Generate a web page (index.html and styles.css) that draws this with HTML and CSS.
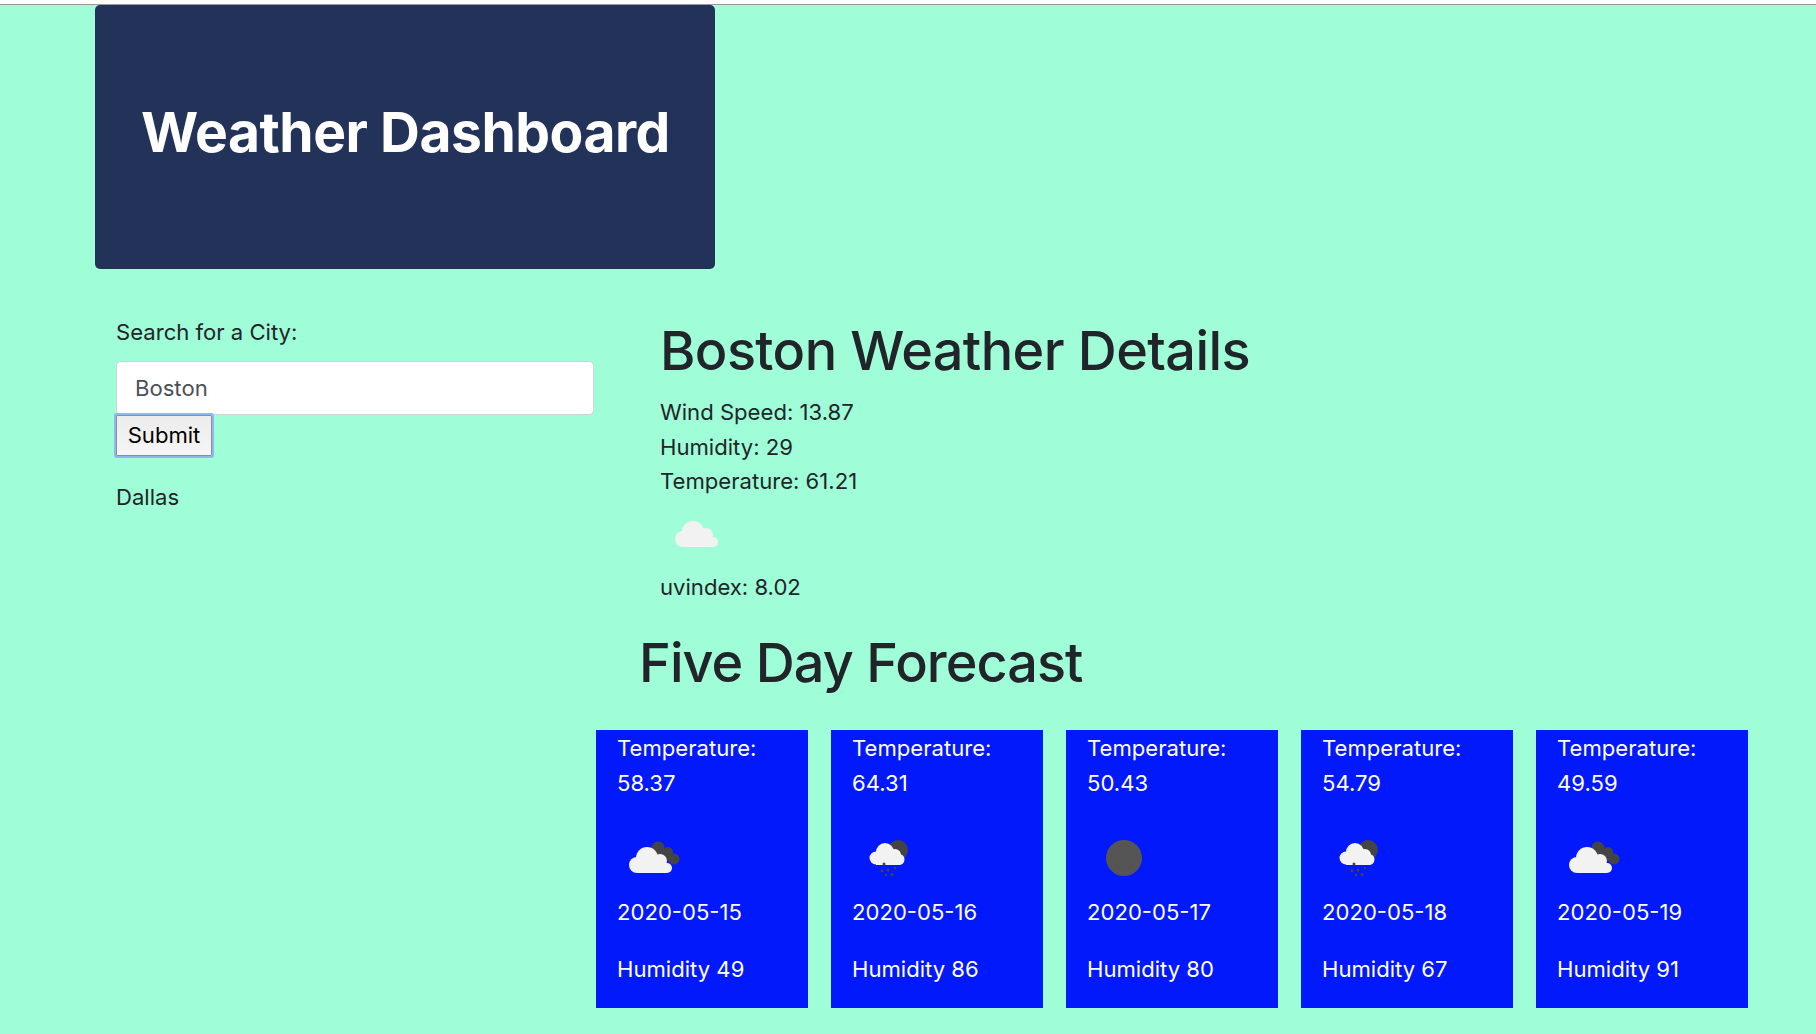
FILE: index.html
```html
<!DOCTYPE html>
<html lang="en">
<head>
    <meta charset="UTF-8">
    <meta name="viewport" content="width=device-width, initial-scale=1.0">
    <title>Weather Dashboard</title>
    <link rel="stylesheet" href="styles.css">
</head>
<body>

    <svg class="icon-defs" width="0" height="0" aria-hidden="true">
        <defs>
            <g id="cloud">
                <circle cx="19" cy="40" r="8"/>
                <circle cx="29" cy="33" r="11"/>
                <circle cx="42" cy="36" r="7"/>
                <circle cx="49" cy="43" r="5"/>
                <rect x="19" y="38" width="30" height="10"/>
            </g>
            <g id="cloud-back">
                <circle cx="40" cy="23" r="6.5"/>
                <circle cx="50" cy="27" r="5"/>
                <circle cx="56" cy="34" r="5.5"/>
                <rect x="38" y="24" width="14" height="12"/>
            </g>
            <g id="shower">
                <circle class="fill-back" cx="45" cy="25" r="10"/>
                <g class="fill-cloud">
                    <circle cx="23" cy="33" r="6.5"/>
                    <circle cx="32" cy="27" r="9"/>
                    <circle cx="42" cy="30" r="6"/>
                    <circle cx="46" cy="34.500" r="5.500"/>
                    <rect x="23" y="31" width="24" height="9"/>
                </g>
                <g class="fill-back">
                    <circle cx="31" cy="39" r="1.500"/>
                    <circle cx="29" cy="46" r="1.400"/>
                    <circle cx="35" cy="45" r="1.500"/>
                    <circle cx="42" cy="43" r="1.200"/>
                    <circle cx="33" cy="50" r="1.200"/>
                    <circle cx="39" cy="49.500" r="1.500"/>
                </g>
            </g>
        </defs>
    </svg>

    <div class="browser-edge"></div>

    <header class="banner">
        <h1>Weather Dashboard</h1>
    </header>

    <div class="content">
        <aside class="search">
            <label class="search-label" for="city">Search for a City:</label>
            <input class="search-input" id="city" type="text" value="Boston">
            <button class="search-button" type="button">Submit</button>
            <p class="history-item">Dallas</p>
        </aside>

        <main class="results">
            <section class="current">
                <h2>Boston Weather Details</h2>
                <p>Wind Speed: 13.87</p>
                <p>Humidity: 29</p>
                <p>Temperature: 61.21</p>
                <svg class="current-icon" viewBox="0 0 70 70"><use class="fill-cloud" href="#cloud"/></svg>
                <p>uvindex: 8.02</p>
            </section>

            <h2 class="forecast-title">Five Day Forecast</h2>

            <div class="forecast">
                <article class="day">
                    <p>Temperature: 58.37</p>
                    <svg class="day-icon" viewBox="0 0 70 70"><use class="fill-back" href="#cloud-back"/><use class="fill-cloud" href="#cloud"/></svg>
                    <p class="day-date">2020-05-15</p>
                    <p>Humidity 49</p>
                </article>
                <article class="day">
                    <p>Temperature: 64.31</p>
                    <svg class="day-icon" viewBox="0 0 70 70"><use href="#shower"/></svg>
                    <p class="day-date">2020-05-16</p>
                    <p>Humidity 86</p>
                </article>
                <article class="day">
                    <p>Temperature: 50.43</p>
                    <svg class="day-icon" viewBox="0 0 70 70"><circle class="fill-sun" cx="36" cy="33" r="18"/></svg>
                    <p class="day-date">2020-05-17</p>
                    <p>Humidity 80</p>
                </article>
                <article class="day">
                    <p>Temperature: 54.79</p>
                    <svg class="day-icon" viewBox="0 0 70 70"><use href="#shower"/></svg>
                    <p class="day-date">2020-05-18</p>
                    <p>Humidity 67</p>
                </article>
                <article class="day">
                    <p>Temperature: 49.59</p>
                    <svg class="day-icon" viewBox="0 0 70 70"><use class="fill-back" href="#cloud-back"/><use class="fill-cloud" href="#cloud"/></svg>
                    <p class="day-date">2020-05-19</p>
                    <p>Humidity 91</p>
                </article>
            </div>
        </main>
    </div>

</body>
</html>
```

FILE: styles.css
```css
body {
    margin: 0;
    height: 1034px;
    overflow: hidden;
    background: #9ffdd7;
    color: #212529;
    font-family: Inter, "Liberation Sans", sans-serif;
    font-size: 22.1px;
    line-height: 34.5px;
}
p {
    margin: 0;
}
h1, h2 {
    margin: 0;
    font-weight: 500;
}
h2 {
    font-size: 54px;
    line-height: 56px;
    letter-spacing: -0.6px;
}
.icon-defs {
    display: block;
}
.browser-edge {
    height: 4px;
    background: #fff;
    border-bottom: 1px solid #999;
}
.banner {
    box-sizing: border-box;
    width: 620px;
    height: 264px;
    margin-left: 95px;
    padding: 88px 0 0 46px;
    background: #233259;
    border-radius: 5px;
}
.banner h1 {
    color: #fff;
    font-size: 55.2px;
    font-weight: 700;
    line-height: 78px;
    letter-spacing: -0.5px;
}
.content {
    display: flex;
    margin-top: 46px;
}
.search {
    box-sizing: border-box;
    width: 596px;
    padding-left: 116px;
}
.search-label {
    display: block;
    margin-bottom: 11px;
}
.search-input {
    display: block;
    box-sizing: border-box;
    width: 478px;
    height: 54px;
    padding: 0 18px;
    background: #fff;
    border: 1px solid #ced4da;
    border-radius: 5px;
    color: #495057;
    font: inherit;
}
.search-button {
    display: block;
    width: 96px;
    height: 41px;
    padding: 0;
    background: linear-gradient(#ececec, #f5f5f5);
    border: 1px solid #8f8f8f;
    border-radius: 1px;
    box-shadow: 0 0 0 2px #8db9ec;
    color: #000;
    font: inherit;
}
.history-item {
    margin-top: 24px;
}
.results {
    flex: 1;
}
.current {
    padding: 8px 0 0 64px;
}
.current h2 {
    margin-bottom: 16px;
}
.current-icon {
    display: block;
    width: 70px;
    height: 70px;
    margin: 0 0 1px 4px;
}
.forecast-title {
    margin: 31px 0 0 43px;
    letter-spacing: -0.95px;
}
.forecast {
    display: flex;
    gap: 23px;
    margin-top: 39px;
}
.day {
    box-sizing: border-box;
    width: 212px;
    height: 278px;
    padding: 1px 21px 0;
    background: #0219fb;
    color: #fff;
}
.day-icon {
    display: block;
    width: 70px;
    height: 70px;
    margin: 25px 0 0 1px;
}
.day-date {
    margin: 0 0 22px;
}
.fill-cloud {
    fill: #f2f2f2;
}
.fill-back {
    fill: #444;
}
.fill-sun {
    fill: #555;
}
```
